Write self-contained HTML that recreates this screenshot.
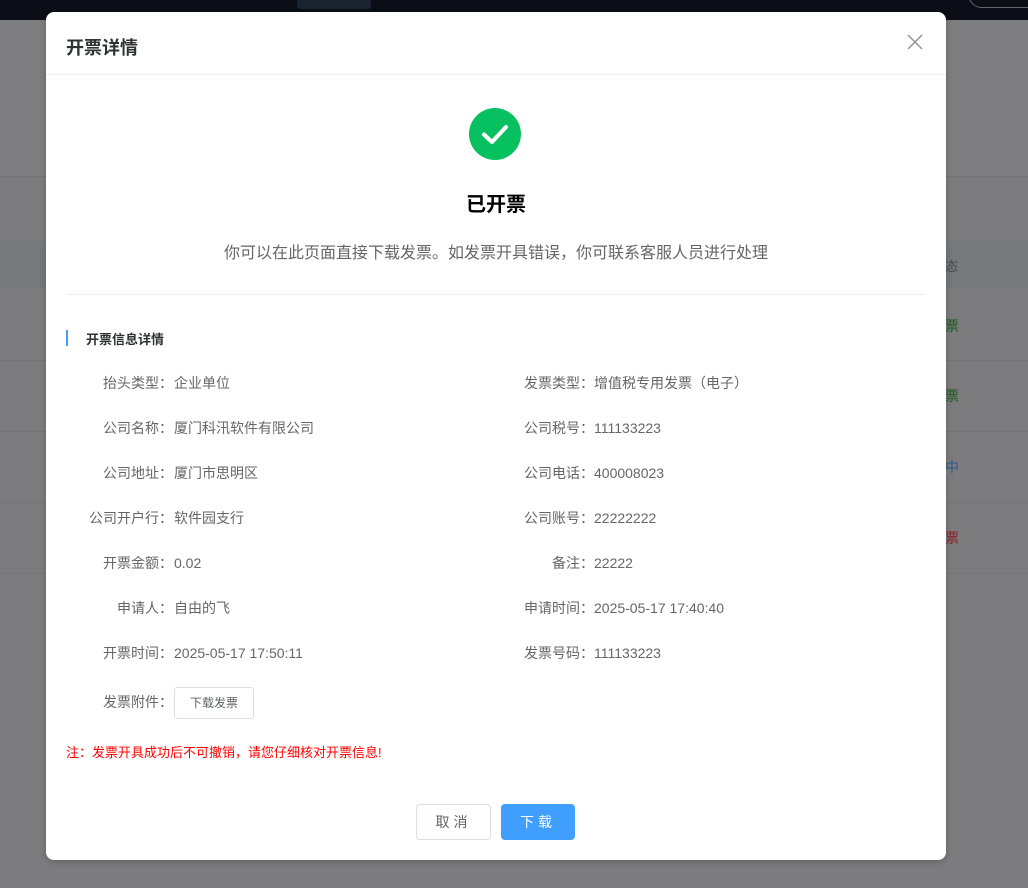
<!DOCTYPE html>
<html><head><meta charset="utf-8"><style>
*{margin:0;padding:0;box-sizing:border-box}
body{width:1028px;height:888px;overflow:hidden;background:#7c7c7e;font-family:"Liberation Sans","Noto Sans CJK SC",sans-serif;position:relative}
.abs{position:absolute}
.lbl{position:absolute;font-size:14px;color:#666;white-space:nowrap;line-height:20px}
.val{position:absolute;font-size:14px;color:#666;white-space:nowrap;line-height:20px}
</style></head><body>
<div class="abs" style="left:0;top:0;width:1028px;height:20px;background:#0b0e17"></div>
<div class="abs" style="left:297px;top:0;width:74px;height:9px;background:#1b2230;border-radius:0 0 3px 3px"></div>
<div class="abs" style="left:968px;top:-20px;width:80px;height:28px;border:1px solid #666;border-radius:14px"></div>
<div class="abs" style="left:0;top:20px;width:1028px;height:157px;background:#7e7e80;border-bottom:1px solid #747578"></div>
<div class="abs" style="left:0;top:241px;width:1028px;height:47px;background:#77787b"></div>
<div class="abs" style="left:0;top:360px;width:1028px;height:1px;background:#747578"></div>
<div class="abs" style="left:0;top:431px;width:1028px;height:1px;background:#747578"></div>
<div class="abs" style="left:0;top:502px;width:1028px;height:1px;background:#747578"></div>
<div class="abs" style="left:0;top:573px;width:1028px;height:1px;background:#747578"></div>
<div class="abs" style="left:932px;top:256px;font-size:13px;color:#4a4a4c">状态</div>
<div class="abs" style="left:945px;top:316px;font-size:14px;color:#1f5a1f">票</div>
<div class="abs" style="left:945px;top:386px;font-size:14px;color:#1f5a1f">票</div>
<div class="abs" style="left:945px;top:457px;font-size:14px;color:#2d5a8c">中</div>
<div class="abs" style="left:945px;top:528px;font-size:14px;color:#8c1f1f">票</div>

<div class="abs" style="left:46px;top:12px;width:900px;height:848px;background:#fff;border-radius:8px;box-shadow:0 2px 8px rgba(0,0,0,.2)">
  <div class="abs" style="left:20px;top:22px;font-size:18px;font-weight:bold;color:#303133">开票详情</div>
  <svg class="abs" style="left:861px;top:22px" width="16" height="16" viewBox="0 0 16 16"><path d="M1 1L15 15M15 1L1 15" stroke="#909399" stroke-width="1.5"/></svg>
  <div class="abs" style="left:0;top:62px;width:900px;height:1px;background:#ebeef5"></div>
  <svg class="abs" style="left:423px;top:96px" width="52" height="52" viewBox="0 0 52 52"><circle cx="26" cy="26" r="26" fill="#07c160"/><path d="M15 26.5L23 34L37 19" stroke="#fff" stroke-width="4" fill="none" stroke-linecap="round" stroke-linejoin="round"/></svg>
  <div class="abs" style="left:0;width:900px;top:176px;text-align:center;font-size:20px;font-weight:bold;color:#000">已开票</div>
  <div class="abs" style="left:0;width:900px;top:227px;text-align:center;font-size:16px;color:#666">你可以在此页面直接下载发票。如发票开具错误，你可联系客服人员进行处理</div>
  <div class="abs" style="left:20px;top:282px;width:860px;height:1px;background:#ebeef5"></div>
  <div class="abs" style="left:20px;top:318px;width:2px;height:16px;background:#409eff"></div>
  <div class="abs" style="left:40px;top:317px;font-size:13px;font-weight:bold;color:#303133">开票信息详情</div>
</div>
<div class="lbl" style="right:855px;top:373px">抬头类型：</div><div class="val" style="left:174px;top:373px">企业单位</div>
<div class="lbl" style="right:855px;top:418px">公司名称：</div><div class="val" style="left:174px;top:418px">厦门科汛软件有限公司</div>
<div class="lbl" style="right:855px;top:463px">公司地址：</div><div class="val" style="left:174px;top:463px">厦门市思明区</div>
<div class="lbl" style="right:855px;top:508px">公司开户行：</div><div class="val" style="left:174px;top:508px">软件园支行</div>
<div class="lbl" style="right:855px;top:553px">开票金额：</div><div class="val" style="left:174px;top:553px">0.02</div>
<div class="lbl" style="right:855px;top:598px">申请人：</div><div class="val" style="left:174px;top:598px">自由的飞</div>
<div class="lbl" style="right:855px;top:643px">开票时间：</div><div class="val" style="left:174px;top:643px">2025-05-17 17:50:11</div>
<div class="lbl" style="right:855px;top:692px">发票附件：</div>
<div class="abs" style="left:174px;top:687px;width:80px;height:32px;border:1px solid #dcdfe6;border-radius:3px;font-size:12px;color:#606266;text-align:center;line-height:30px;background:#fff">下载发票</div>
<div class="lbl" style="right:434px;top:373px">发票类型：</div><div class="val" style="left:594px;top:373px">增值税专用发票（电子）</div>
<div class="lbl" style="right:434px;top:418px">公司税号：</div><div class="val" style="left:594px;top:418px">111133223</div>
<div class="lbl" style="right:434px;top:463px">公司电话：</div><div class="val" style="left:594px;top:463px">400008023</div>
<div class="lbl" style="right:434px;top:508px">公司账号：</div><div class="val" style="left:594px;top:508px">22222222</div>
<div class="lbl" style="right:434px;top:553px">备注：</div><div class="val" style="left:594px;top:553px">22222</div>
<div class="lbl" style="right:434px;top:598px">申请时间：</div><div class="val" style="left:594px;top:598px">2025-05-17 17:40:40</div>
<div class="lbl" style="right:434px;top:643px">发票号码：</div><div class="val" style="left:594px;top:643px">111133223</div>
<div class="abs" style="left:66px;top:742px;font-size:13px;color:#f00">注：发票开具成功后不可撤销，请您仔细核对开票信息!</div>
<div class="abs" style="left:416px;top:804px;width:75px;height:36px;border:1px solid #dcdfe6;border-radius:4px;font-size:14px;color:#606266;text-align:center;line-height:34px;letter-spacing:4px">取消</div>
<div class="abs" style="left:501px;top:804px;width:74px;height:36px;background:#409eff;border-radius:4px;font-size:14px;color:#fff;text-align:center;line-height:36px;letter-spacing:4px">下载</div>
</body></html>
